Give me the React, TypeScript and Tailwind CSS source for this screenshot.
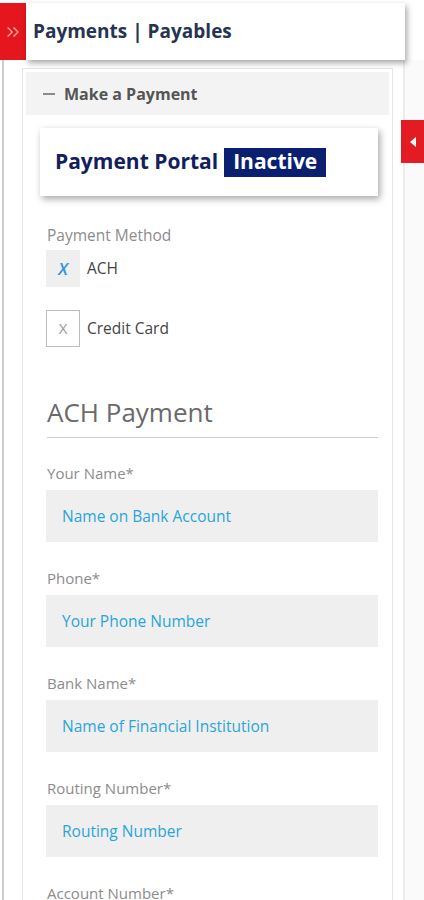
import { ChevronsRight } from "lucide-react";

const fields = [
  { label: "Your Name*", placeholder: "Name on Bank Account" },
  { label: "Phone*", placeholder: "Your Phone Number" },
  { label: "Bank Name*", placeholder: "Name of Financial Institution" },
  { label: "Routing Number*", placeholder: "Routing Number" },
  { label: "Account Number*", placeholder: "Account Number" },
];

const App = () => {
  return (
    <div className="relative w-[424px] min-h-[900px] bg-white overflow-hidden font-['Open_Sans',sans-serif]">
      {/* Header */}
      <header className="flex pt-[3px]">
        <div className="w-[26px] h-[57px] bg-[#e5161e] flex items-center justify-center">
          <ChevronsRight size={20} strokeWidth={1.6} className="text-[#ffa8a8]" />
        </div>
        <div className="relative z-10 w-[379px] h-[57px] bg-white shadow-[2px_3px_6px_rgba(0,0,0,0.35)] flex items-center pl-[7px]">
          <h1 className="text-[19px] font-bold text-[#26344f]">Payments | Payables</h1>
        </div>
      </header>

      {/* Body */}
      <div className="flex">
        <div className="ml-[2px] w-[20px] border-l-2 border-[#cdcdcd]" />

        <section className="mt-[8px] w-[371px] border border-[#e6e6e6] bg-white p-[3px]">
          {/* Accordion bar */}
          <div className="h-[43px] bg-[#f3f3f3] flex items-center pl-[17px] gap-[9px]">
            <span className="w-[12px] h-[2px] bg-[#8a8a8a]" />
            <span className="text-[16px] font-bold text-[#555]">Make a Payment</span>
          </div>

          <div className="pl-[21px] pr-[11px] pb-[40px]">
            {/* Portal status */}
            <div className="mt-[13px] -ml-[7px] w-[338px] h-[68px] bg-white shadow-[2px_3px_7px_rgba(0,0,0,0.35)] flex items-center pl-[15px]">
              <span className="text-[21px] font-bold text-[#14205e]">Payment Portal</span>
              <span className="ml-[6px] h-[29px] px-[9px] bg-[#0b1f70] text-white text-[21px] font-bold flex items-center">
                Inactive
              </span>
            </div>

            {/* Payment method */}
            <p className="mt-[29px] text-[15.5px] leading-[20px] text-[#8c8c8c]">Payment Method</p>
            <div className="mt-[5px] flex items-center gap-[7px]">
              <div className="-ml-[1px] w-[34px] h-[37px] bg-[#efefef] flex items-center justify-center text-[17px] italic font-semibold text-[#3796da]">
                X
              </div>
              <span className="text-[15.5px] text-[#444]">ACH</span>
            </div>
            <div className="mt-[23px] flex items-center gap-[7px]">
              <div className="-ml-[1px] w-[34px] h-[37px] border border-[#bdbdbd] bg-white flex items-center justify-center text-[15px] text-[#9a9a9a]">
                X
              </div>
              <span className="text-[15.5px] text-[#444]">Credit Card</span>
            </div>

            {/* ACH form */}
            <h2 className="mt-[49px] text-[26px] leading-[32px] text-[#6a6a6a]">ACH Payment</h2>
            <div className="mt-[9px] border-t border-[#cccccc]" />

            <div className="mt-[24px] flex flex-col gap-[25px]">
              {fields.map((f) => (
                <div key={f.label}>
                  <label className="block text-[15px] leading-[22px] text-[#8c8c8c]">{f.label}</label>
                  <input
                    placeholder={f.placeholder}
                    className="mt-[6px] -ml-[1px] w-[332px] h-[52px] bg-[#efefef] pl-[16px] text-[15.5px] outline-none placeholder:text-[#2aa5dc]"
                  />
                </div>
              ))}
            </div>
          </div>
        </section>

        <div className="w-[10px]" />
        <div className="w-[2px] bg-[#ececec]" />
        <div className="flex-1 bg-[#fafafa]" />
      </div>

      {/* Side tab */}
      <div className="absolute top-[120px] right-0 w-[23px] h-[43px] bg-[#e31b23] flex items-center pl-[9px]">
        <span className="w-0 h-0 border-y-[5px] border-y-transparent border-r-[6px] border-r-white" />
      </div>
    </div>
  );
};

export default App;
